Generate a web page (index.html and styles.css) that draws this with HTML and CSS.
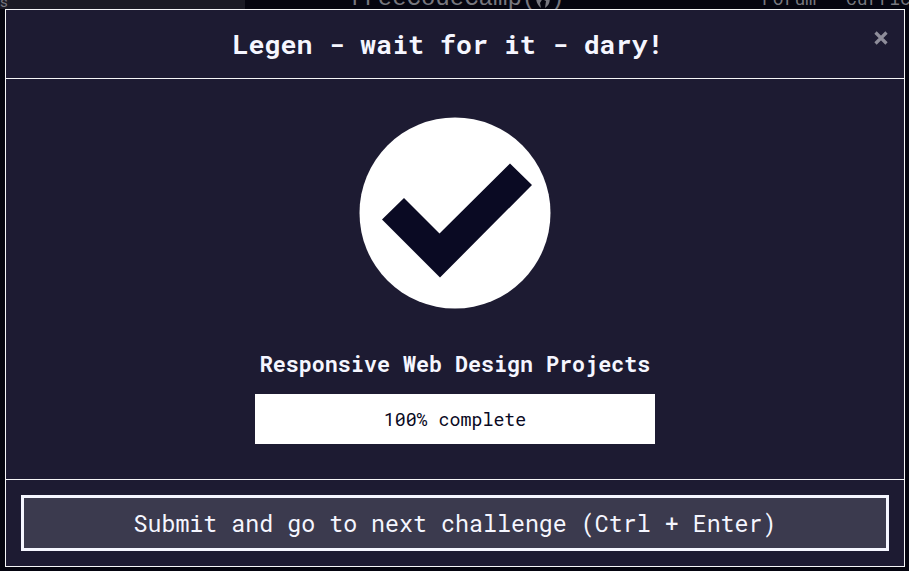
FILE: index.html
```html
<!DOCTYPE html>
<html lang="en">
<head>
<meta charset="utf-8">
<title>Challenge complete</title>
<link rel="stylesheet" href="styles.css">
</head>
<body>
<header class="site-nav">
  <div class="search">s</div>
  <div class="brand">freeCodeCamp(<svg class="flame" viewBox="0 0 16 20"><path d="M2 2C0 9 1 15 6 19L5 14 8 9zM8 2c3 3 3 6 1 9l2 1-1 7c6-4 6-11 2-17z" fill="currentColor"/></svg>)</div>
  <nav class="links"><span>Forum</span><span>Curriculum</span></nav>
</header>
<main class="modal">
  <div class="modal-header">
    <h1>Legen - wait for it - dary!</h1>
    <button class="close" aria-label="Close"><svg viewBox="0 0 14 14"><path d="M1.500 1.500l11 11M12.500 1.500l-11 11" stroke="currentColor" stroke-width="3.2"/></svg></button>
  </div>
  <div class="modal-body">
    <svg class="check" viewBox="0 0 192 192"><circle cx="96" cy="96" r="95.5" fill="#fff"/><path d="M23 102.500L45 81l35.500 35.500L151 46.500 173 68 81 160.500z" fill="#0a0a23"/></svg>
    <h2>Responsive Web Design Projects</h2>
    <div class="progress"><span>100% complete</span></div>
  </div>
  <div class="modal-footer">
    <button class="submit"><span>Submit and go to next challenge (Ctrl + Enter)</span></button>
  </div>
</main>
</body>
</html>
```
FILE: styles.css
```css
* { box-sizing: border-box; }
body {
  margin: 0;
  width: 909px;
  height: 571px;
  overflow: hidden;
  background: #05050f;
  color: #f5f6ff;
  font-family: "Roboto Mono", "DejaVu Sans Mono", monospace;
}
.site-nav {
  display: flex;
  align-items: flex-end;
  height: 9px;
  overflow: hidden;
  color: #77777e;
  white-space: nowrap;
}
.site-nav > * { flex: none; }
.search {
  width: 245px;
  height: 9px;
  background: #1b1b25;
  font: 15px/4px "Roboto", sans-serif;
}
.brand {
  margin-left: 104px;
  width: 413px;
  height: 20px;
  font: 24px/20px "Liberation Mono", monospace;
}
.flame { width: 16px; height: 20px; margin: 0 -1px; vertical-align: -4px; }
.links {
  display: flex;
  gap: 30px;
  height: 22px;
  font-size: 18px;
  line-height: 22px;
}
.modal {
  display: flex;
  flex-direction: column;
  width: 900px;
  height: 558px;
  margin-left: 5px;
  background: #1d1b32;
  border: 1px solid #f5f6f7;
}
.modal-header {
  display: grid;
  grid-template-columns: 24px 1fr 30px;
  height: 69px;
  padding: 0 8px 0 0;
  border-bottom: 1px solid #f5f6f7;
}
h1, h2 { margin: 0; font-weight: 700; white-space: nowrap; }
h1 {
  grid-column: 2;
  font-size: 26.6px;
  line-height: 67px;
  text-align: center;
}
button { font-family: inherit; }
.close {
  height: 28px;
  margin-top: 14px;
  padding: 6px 8px;
  border: 0;
  background: none;
  color: #8e8d9a;
}
.close svg { display: block; width: 14px; height: 14px; }
.modal-body {
  display: flex;
  flex-direction: column;
  align-items: center;
  height: 401px;
  padding-top: 38px;
  border-bottom: 1px solid #f5f6f7;
}
.check { width: 192px; height: 192px; flex: none; }
h2 { margin-top: 40px; font-size: 21.7px; line-height: 30px; }
.progress {
  width: 400px;
  height: 50px;
  margin-top: 15px;
  background: #fff;
  color: #0a0a23;
  font-size: 18.3px;
  line-height: 51px;
  text-align: center;
}
.modal-footer { padding: 15px; }
.submit {
  display: block;
  width: 868px;
  height: 56px;
  padding: 0;
  border: 3px solid #f5f6ff;
  background: #3b3a4e;
  color: #f5f6ff;
  font-size: 23.3px;
}
```
